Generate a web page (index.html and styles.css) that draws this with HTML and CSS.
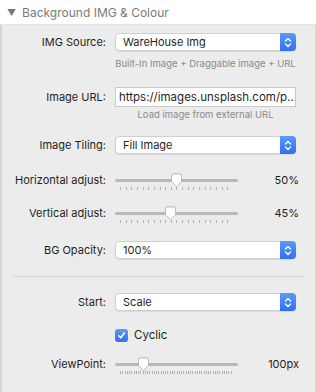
FILE: index.html
```html
<!DOCTYPE html>
<html lang="en">
<head>
  <meta charset="UTF-8" />
  <meta name="viewport" content="width=device-width, initial-scale=1.0" />
  <title>Background IMG &amp; Colour</title>
  <link rel="stylesheet" href="styles.css">
</head>
<body>
  <div class="panel">
    <div class="panel-head">
      <span class="caret">&#9660;</span>
      <span class="title">Background IMG &amp; Colour</span>
    </div>

    <div class="panel-body">
      <div class="row r-source">
        <label>IMG Source:</label>
        <div class="select">
          <span>WareHouse Img</span>
          <span class="stepper"><svg width="8" height="11" viewBox="0 0 8 11"><path d="M1.5 4 L4 1.5 L6.5 4 M1.5 7 L4 9.5 L6.5 7" fill="none" stroke="#fff" stroke-width="1.4" stroke-linecap="round" stroke-linejoin="round"/></svg></span>
        </div>
      </div>
      <div class="hint h-source">Built-In Image + Draggable image + URL</div>

      <div class="row r-url">
        <label>Image URL:</label>
        <div class="input">https://images.unsplash.com/p...</div>
      </div>
      <div class="hint h-url">Load image from external URL</div>

      <div class="row r-tiling">
        <label>Image Tiling:</label>
        <div class="select">
          <span>Fill Image</span>
          <span class="stepper"><svg width="8" height="11" viewBox="0 0 8 11"><path d="M1.5 4 L4 1.5 L6.5 4 M1.5 7 L4 9.5 L6.5 7" fill="none" stroke="#fff" stroke-width="1.4" stroke-linecap="round" stroke-linejoin="round"/></svg></span>
        </div>
      </div>

      <div class="row r-hadj">
        <label>Horizontal adjust:</label>
        <div class="slider">
          <div class="track"></div>
          <div class="ticks"></div>
          <svg class="thumb" style="left: 61.5px" width="13" height="15" viewBox="0 0 13 15"><path d="M1.5 3 Q1.5 1 3.5 1 H9.5 Q11.5 1 11.5 3 V8.5 L6.5 13.5 L1.5 8.5 Z" fill="#fff" stroke="#b4b4b4" stroke-width="0.8"/></svg>
        </div>
        <span class="value">50%</span>
      </div>

      <div class="row r-vadj">
        <label>Vertical adjust:</label>
        <div class="slider">
          <div class="track"></div>
          <div class="ticks"></div>
          <svg class="thumb" style="left: 55.4px" width="13" height="15" viewBox="0 0 13 15"><path d="M1.5 3 Q1.5 1 3.5 1 H9.5 Q11.5 1 11.5 3 V8.5 L6.5 13.5 L1.5 8.5 Z" fill="#fff" stroke="#b4b4b4" stroke-width="0.8"/></svg>
        </div>
        <span class="value">45%</span>
      </div>

      <div class="row r-opacity">
        <label>BG Opacity:</label>
        <div class="select">
          <span>100%</span>
          <span class="stepper"><svg width="8" height="11" viewBox="0 0 8 11"><path d="M1.5 4 L4 1.5 L6.5 4 M1.5 7 L4 9.5 L6.5 7" fill="none" stroke="#fff" stroke-width="1.4" stroke-linecap="round" stroke-linejoin="round"/></svg></span>
        </div>
      </div>

      <hr class="sep" />

      <div class="row r-start">
        <label>Start:</label>
        <div class="select">
          <span>Scale</span>
          <span class="stepper"><svg width="8" height="11" viewBox="0 0 8 11"><path d="M1.5 4 L4 1.5 L6.5 4 M1.5 7 L4 9.5 L6.5 7" fill="none" stroke="#fff" stroke-width="1.4" stroke-linecap="round" stroke-linejoin="round"/></svg></span>
        </div>
      </div>

      <div class="row r-cyclic">
        <label></label>
        <div class="check">
          <span class="box"><svg width="9" height="9" viewBox="0 0 9 9"><path d="M1.8 4.8 L3.7 6.8 L7.3 2" fill="none" stroke="#fff" stroke-width="1.6" stroke-linecap="round" stroke-linejoin="round"/></svg></span>
          <span>Cyclic</span>
        </div>
      </div>

      <div class="row r-view">
        <label>ViewPoint:</label>
        <div class="slider">
          <div class="track"></div>
          <div class="ticks dense"></div>
          <svg class="thumb" style="left: 28px" width="13" height="15" viewBox="0 0 13 15"><path d="M1.5 3 Q1.5 1 3.5 1 H9.5 Q11.5 1 11.5 3 V8.5 L6.5 13.5 L1.5 8.5 Z" fill="#fff" stroke="#b4b4b4" stroke-width="0.8"/></svg>
        </div>
        <span class="value">100px</span>
      </div>
    </div>
  </div>
</body>
</html>
```

FILE: styles.css
```css
body {
  margin: 0;
  font-family: Inter, "Noto Sans", sans-serif;
  background: #ececec;
  color: #1f1f1f;
}
.panel {
  width: 316px;
  height: 392px;
  overflow: hidden;
}
.panel-head {
  height: 24px;
  background: #fff;
  border-bottom: 1px solid #e2e2e2;
  display: flex;
  align-items: center;
  padding-left: 7px;
  color: #7a7a7a;
  font-size: 12px;
}
.caret {
  font-size: 9px;
  color: #777;
  margin-right: 6px;
}
.panel-body {
  height: 367px;
  border-left: 2px solid #d4d4d4;
  border-right: 1px solid #dadada;
  padding-top: 7px;
}
.row {
  display: flex;
  align-items: center;
  height: 20px;
  font-size: 11px;
}
.row label {
  width: 104px;
  text-align: right;
  margin-right: 9px;
}
.select {
  width: 181px;
  height: 18px;
  box-sizing: border-box;
  background: #fff;
  border: 1px solid #cfcfcf;
  border-radius: 4px;
  box-shadow: 0 1px 1px rgba(0, 0, 0, 0.08);
  display: flex;
  align-items: center;
  justify-content: space-between;
  padding-left: 7px;
}
.stepper {
  width: 16px;
  height: 18px;
  margin-right: -1px;
  border-radius: 0 4px 4px 0;
  background: linear-gradient(#5b9bf8, #2f6ff0);
  display: flex;
  align-items: center;
  justify-content: center;
}
.input {
  width: 181px;
  height: 20px;
  box-sizing: border-box;
  background: #fff;
  border: 1px solid #c9c9c9;
  padding: 0 3px;
  line-height: 18px;
  white-space: nowrap;
  overflow: hidden;
  font-size: 11.5px;
}
.hint {
  width: 181px;
  margin-left: 113px;
  text-align: center;
  font-size: 9.5px;
  color: #8a8a8a;
  line-height: 14px;
}
.slider {
  position: relative;
  width: 123px;
  height: 20px;
}
.track {
  position: absolute;
  left: 0;
  right: 0;
  top: 9px;
  height: 3px;
  border-radius: 2px;
  background: #b8b8b8;
}
.ticks {
  position: absolute;
  left: 5px;
  right: 5px;
  top: 17px;
  height: 3px;
  background: repeating-linear-gradient(90deg, #b0b0b0 0 1px, transparent 1px 5.65px);
}
.ticks.dense {
  background: repeating-linear-gradient(90deg, #b0b0b0 0 1px, transparent 1px 2.26px);
}
.thumb {
  position: absolute;
  top: 3px;
  margin-left: -6.5px;
  filter: drop-shadow(0 0.5px 0.5px rgba(0, 0, 0, 0.25));
}
.value {
  flex: 1;
  text-align: right;
  padding-right: 16px;
}
.check {
  display: flex;
  align-items: center;
  gap: 6px;
  font-size: 11.5px;
}
.box {
  width: 13px;
  height: 13px;
  border-radius: 3px;
  background: linear-gradient(#5b9bf8, #2f6ff0);
  display: flex;
  align-items: center;
  justify-content: center;
}
.sep {
  border: 0;
  border-top: 1px solid #d6d6d6;
  margin: 16px 11px 0 11px;
}
.h-source { margin-top: 5px; }
.r-url { margin-top: 16px; }
.h-url { margin-top: 1px; }
.r-tiling { margin-top: 13px; }
.r-hadj { margin-top: 15px; }
.r-vadj { margin-top: 13px; }
.r-opacity { margin-top: 17px; }
.r-start { margin-top: 15px; }
.r-cyclic { margin-top: 13px; }
.r-view { margin-top: 9px; }
```
